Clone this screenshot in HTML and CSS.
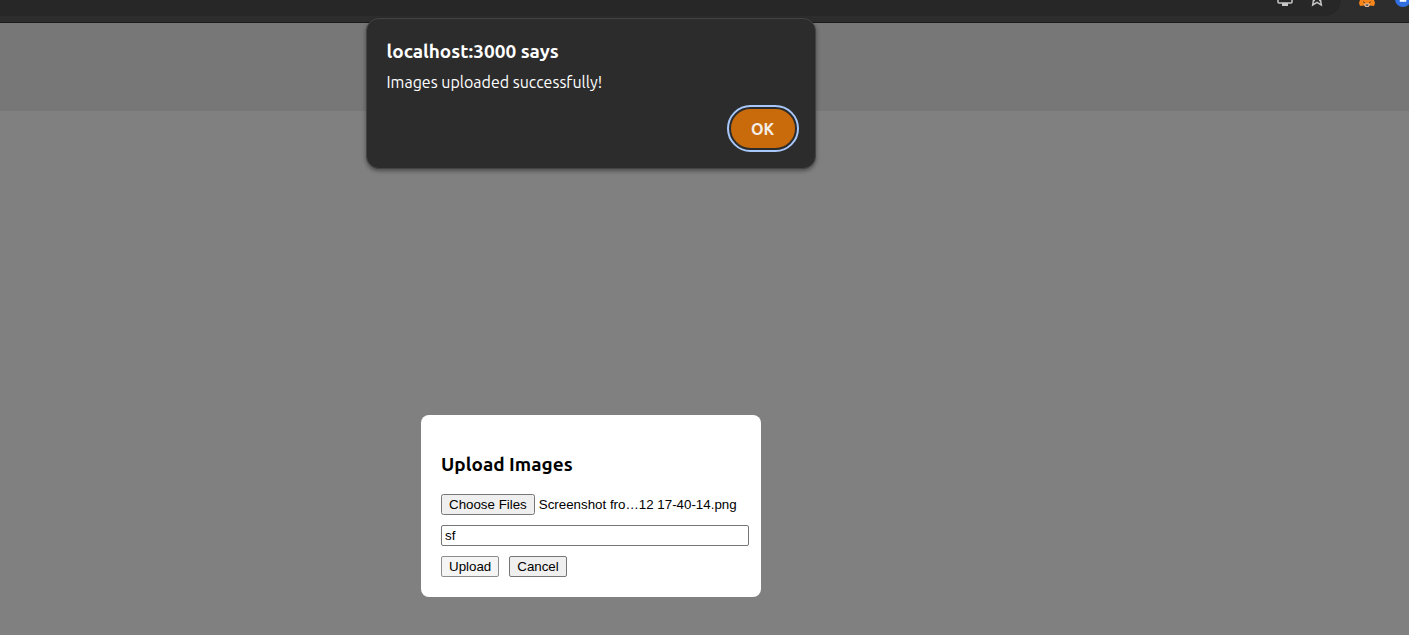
FILE: index.html
```html
<!DOCTYPE html>
<html lang="en">
<head>
<meta charset="utf-8">
<title>Upload Images</title>
<link rel="stylesheet" href="styles.css">
</head>
<body>
<div class="toolbar">
  <div class="address">
    <svg class="icon-screen" width="18" height="8" viewBox="0 0 18 8"><path d="M2 0V2Q2 3 3 3H15Q16 3 16 2V0" fill="none" stroke="#c7c7c7" stroke-width="1.5"/><path d="M6 3H12V6H6Z" fill="#c7c7c7"/></svg>
    <svg width="12" height="8" viewBox="0 0 12 8"><path d="M2.5 0L1.7 5L6 2.300L10.3 5L9.5 0M2.5 0.500H4M8 0.500H9.500" fill="none" stroke="#c7c7c7" stroke-width="1.500"/></svg>
  </div>
  <svg class="icon-fox" width="16" height="8" viewBox="0 0 16 8"><path d="M1 0H15L16 3L15 6L11 5.500L9.500 7H6.500L5 5.500L1 6L0 3Z" fill="#f6851b"/><path d="M5 4.500L6.500 3.500H9.500L11 4.500L9.500 7H6.500Z" fill="#d6c0b3"/><path d="M4 1L6 2.500L5 3.300ZM12 1L10 2.500L11 3.300ZM6.700 4.500H9.300V5.700H6.700Z" fill="#3c3430"/></svg>
  <svg class="icon-profile" width="14" height="8" viewBox="0 0 14 8"><circle cx="8" cy="-1" r="8" fill="#2f6fe0"/><path d="M5.500 0V1H7.500V0H8.500V1H10.500V0" fill="none" stroke="#fff" stroke-width="1.500"/></svg>
</div>
<header class="page-header"></header>
<main class="page">
  <form class="modal">
    <h3 class="modal-title">Upload Images</h3>
    <input class="file" type="file" id="images" aria-label="Images" multiple>
    <input class="caption" type="text" value="sf" aria-label="Caption">
    <div class="actions">
      <button class="btn btn-active" type="button">Upload</button>
      <button class="btn" type="button">Cancel</button>
    </div>
  </form>
</main>
<div class="alert" role="alertdialog" aria-labelledby="alert-title">
  <h2 class="alert-title" id="alert-title">localhost:3000 says</h2>
  <p class="alert-text">Images uploaded successfully!</p>
  <button class="ok" type="button">OK</button>
</div>
<script src="script.js"></script>
</body>
</html>
```
FILE: styles.css
```css
* { box-sizing: border-box; }
body {
  margin: 0;
  min-height: 100vh;
  display: flex;
  flex-direction: column;
  background: #808080;
  font-family: Ubuntu, "Noto Sans", sans-serif;
}
.toolbar {
  display: flex;
  align-items: flex-start;
  height: 23px;
  background: #2d2d2d;
  border-bottom: 1px solid #1b1b1b;
}
.address {
  flex: 1;
  display: flex;
  justify-content: flex-end;
  gap: 17px;
  height: 16px;
  margin-right: 18px;
  padding-right: 18px;
  background: #272727;
  border-bottom-right-radius: 16px;
}
.icon-profile { margin-left: 20px; }
.page-header {
  height: 88px;
  background: #777;
}
.page {
  flex: 1;
  display: flex;
  justify-content: center;
  align-items: flex-start;
  padding: 304px 227px 38px 0;
}
.modal {
  width: 340px;
  padding: 20px;
  background: #fff;
  border-radius: 8px;
}
.modal-title {
  margin: 18px 0;
  font-size: 19px;
  line-height: 23px;
  color: #000;
}
.file, .caption, .btn {
  font-family: "Liberation Sans", Arial, sans-serif;
}
.file {
  display: block;
  width: 300px;
  margin-bottom: 10px;
  color: #000;
}
.caption {
  display: block;
  width: 308px;
  height: 21px;
  margin-bottom: 10px;
  padding: 1px 3px;
  border: 1px solid #767676;
  border-radius: 2px;
}
.actions { display: flex; gap: 10px; }
.btn {
  height: 21px;
  padding: 1px 7px;
  border: 1px solid #767676;
  border-radius: 2px;
  background: #efefef;
  color: #000;
}
.btn-active { background: #f5f5f5; border-color: #8d8d8d; }
.alert {
  position: absolute;
  top: 18px;
  left: calc(50% - 339px);
  width: 450px;
  display: flex;
  flex-direction: column;
  padding: 20px 16px 16px 20px;
  background: #2c2c2c;
  color: #fff;
  border: 1px solid #444;
  border-radius: 13px;
  box-shadow: 0 2px 4px rgba(0, 0, 0, 0.4);
}
.alert-title {
  margin: 0;
  font-size: 19px;
  font-weight: 600;
  line-height: 24px;
}
.alert-text {
  margin: 8px 0 14px;
  font-size: 16px;
  line-height: 22px;
}
.ok {
  align-self: flex-end;
  width: 68px;
  height: 43px;
  margin: 0 2px 2px;
  border: 2px solid #2c2c2c;
  border-radius: 22px;
  outline: 2px solid #a8c7fa;
  background: #c96a0b;
  color: #f4eee9;
  font-family: inherit;
  font-size: 16px;
  font-weight: 600;
}
```
FILE: script.js
```js
const transfer = new DataTransfer();
transfer.items.add(new File([""], "Screenshot fro…12 17-40-14.png", { type: "image/png" }));
document.getElementById("images").files = transfer.files;
```
